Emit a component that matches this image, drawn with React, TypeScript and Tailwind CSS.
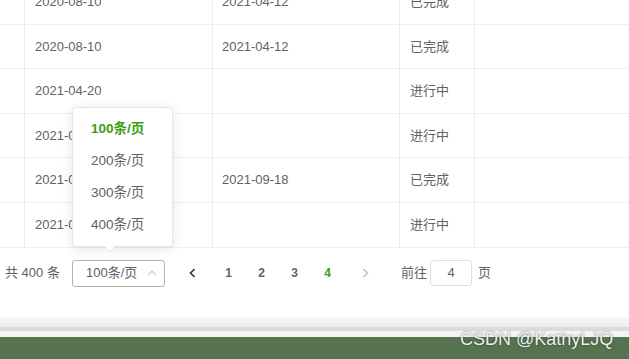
type Row = {
  start: string;
  end: string;
  status: string;
};

const rows: Row[] = [
  { start: '2020-08-10', end: '2021-04-12', status: '已完成' },
  { start: '2020-08-10', end: '2021-04-12', status: '已完成' },
  { start: '2021-04-20', end: '', status: '进行中' },
  { start: '2021-04-25', end: '', status: '进行中' },
  { start: '2021-05-06', end: '2021-09-18', status: '已完成' },
  { start: '2021-06-01', end: '', status: '进行中' },
];

const sizes = ['100条/页', '200条/页', '300条/页', '400条/页'];

const TableRow = ({ row }: { row: Row }) => (
  <div className="flex h-[44.6px] border-b border-[#ebeef5] text-[13px] text-[#606266]">
    <div className="w-[25px] shrink-0 border-r border-[#ebeef5]" />
    <div className="w-[188px] shrink-0 border-r border-[#ebeef5] pl-[10px] flex items-center">
      {row.start}
    </div>
    <div className="w-[187px] shrink-0 border-r border-[#ebeef5] pl-[9px] flex items-center">
      {row.end}
    </div>
    <div className="w-[75px] shrink-0 border-r border-[#ebeef5] pl-[10px] flex items-center">
      {row.status}
    </div>
    <div className="flex-1" />
  </div>
);

const SizeMenu = () => (
  <div className="absolute left-[72px] top-[107px] w-[101px] h-[140px] bg-white border border-[#e4e7ed] rounded-[4px] shadow-[0_2px_12px_rgba(0,0,0,0.1)] py-[5px]">
    {sizes.map((s, i) => (
      <div
        key={s}
        className={
          i === 0
            ? 'h-[32px] flex items-center pl-[18px] text-[13.5px] font-bold text-[#409b11]'
            : 'h-[32px] flex items-center pl-[18px] text-[13.5px] text-[#606266]'
        }
      >
        {s}
      </div>
    ))}
    <div className="absolute left-[31px] -bottom-[6px] w-0 h-0 border-x-[6px] border-x-transparent border-t-[6px] border-t-[#e4e7ed]" />
    <div className="absolute left-[32px] -bottom-[5px] w-0 h-0 border-x-[5px] border-x-transparent border-t-[5px] border-t-white" />
  </div>
);

const Pager = () => (
  <div className="h-[69px] flex items-start pt-[12px] pl-[5px] text-[13px] text-[#606266]">
    <span className="w-[67px] shrink-0 h-[27px] flex items-center">共 400 条</span>
    <div className="w-[93px] h-[27px] shrink-0 border border-[#a3bd9e] rounded-[3px] flex items-center justify-between pl-[13px] pr-[7px]">
      <span>100条/页</span>
      <svg width="10" height="6" viewBox="0 0 10 6" fill="none">
        <path d="M1 5.2 5 1.2 9 5.2" stroke="#c0c4cc" strokeWidth="1.2" />
      </svg>
    </div>
    <div className="ml-[11px] w-[33px] h-[27px] flex items-center justify-center">
      <svg width="7" height="10" viewBox="0 0 7 10" fill="none">
        <path d="M5.5 1 1.5 5 5.5 9" stroke="#303133" strokeWidth="1.6" />
      </svg>
    </div>
    <div className="ml-[3px] h-[27px] flex items-center font-bold text-[12px] text-[#606266]">
      <span className="w-[33px] text-center">1</span>
      <span className="w-[33px] text-center">2</span>
      <span className="w-[33px] text-center">3</span>
      <span className="w-[33px] text-center text-[#409b11]">4</span>
    </div>
    <div className="w-[42px] h-[27px] flex items-center justify-center">
      <svg width="7" height="10" viewBox="0 0 7 10" fill="none">
        <path d="M1.5 1 5.5 5 1.5 9" stroke="#c0c4cc" strokeWidth="1.6" />
      </svg>
    </div>
    <span className="ml-[15px] h-[27px] flex items-center">前往</span>
    <div className="ml-[3px] w-[42px] h-[26px] border border-[#dcdfe6] rounded-[3px] flex items-center justify-center">
      4
    </div>
    <span className="ml-[6px] h-[27px] flex items-center">页</span>
  </div>
);

export default function App() {
  return (
    <div className="relative w-[629px] h-[359px] overflow-hidden bg-white font-['Liberation_Sans','Noto_Sans_CJK_SC',sans-serif]">
      <div className="-mt-[20px]">
        {rows.map((r, i) => (
          <TableRow key={i} row={r} />
        ))}
      </div>
      <Pager />
      <div className="h-[10px] bg-gradient-to-b from-[#f6f7f7] to-[#ededee]" />
      <div className="h-[4px] bg-[#dadcdc]" />
      <div className="h-[6px] bg-[#f3f4f4]" />
      <div className="h-[30px] bg-[#56734f]" />
      <SizeMenu />
      <div className="absolute left-[460px] top-[326px] text-[18px] text-[#eef0ee] [text-shadow:0_0_2px_rgba(0,0,0,0.6)]">
        CSDN @KathyLJQ
      </div>
    </div>
  );
}
